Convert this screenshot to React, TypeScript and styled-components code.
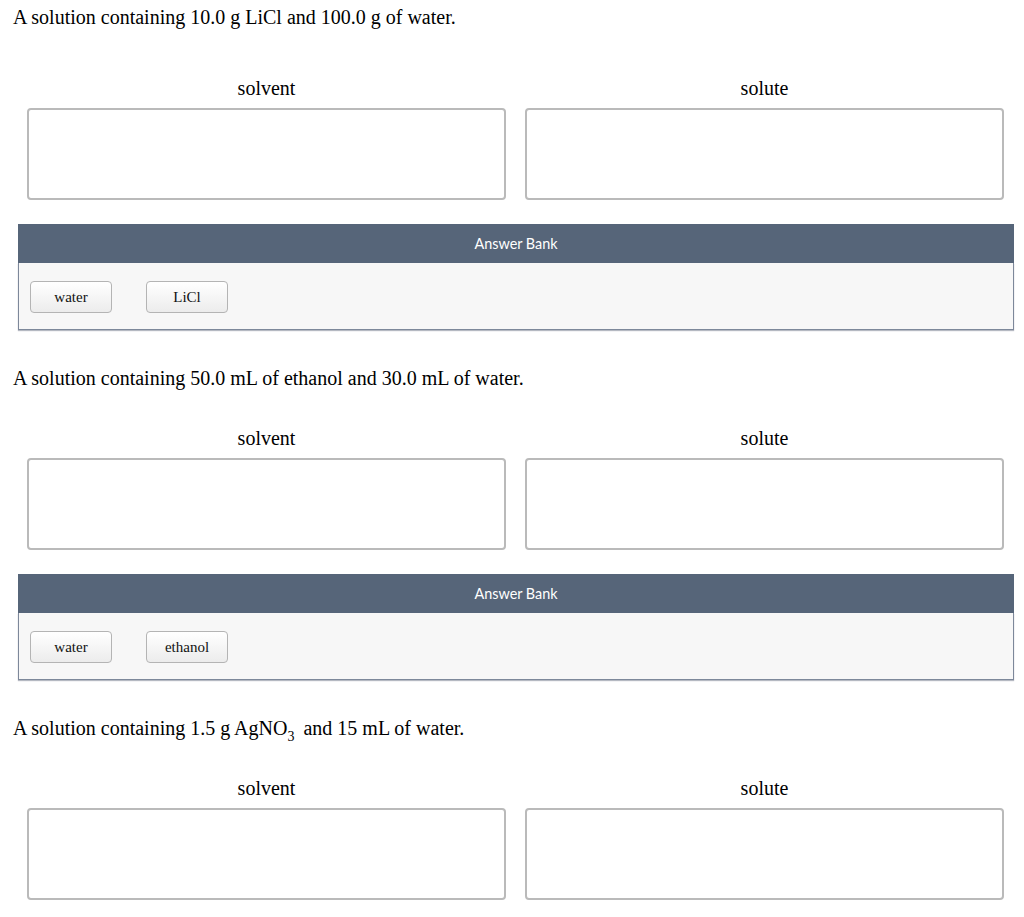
import React from 'react';
import styled, { createGlobalStyle } from 'styled-components';

const GlobalStyle = createGlobalStyle`
  html, body {
    margin: 0;
    padding: 0;
    background: #ffffff;
  }

  body {
    font-family: 'Liberation Serif', 'Times New Roman', serif;
    color: #000000;
  }
`;

const StyledPage = styled.main`
  display: flex;
  flex-direction: column;
  padding: 6px 10px 0 13px;
`;

const StyledQuestion = styled.section<{ $first?: boolean }>`
  display: flex;
  flex-direction: column;
  margin-top: ${({ $first }) => ($first ? '0' : '37px')};

  .prompt {
    margin: 0;
    font-family: 'Liberation Serif', 'Times New Roman', serif;
    font-size: 20px;
    line-height: 23px;
  }

  .prompt sub {
    font-size: 14px;
    line-height: 0;
    vertical-align: -6px;
    margin-right: 4px;
  }

  .targets {
    display: grid;
    grid-template-columns: 1fr 1fr;
    gap: 19px;
    margin: ${({ $first }) => ($first ? '48px' : '37px')} 10px 0 14px;
  }
`;

const StyledTarget = styled.div`
  display: flex;
  flex-direction: column;

  span {
    text-align: center;
    font-family: 'Liberation Serif', 'Times New Roman', serif;
    font-size: 20px;
    line-height: 23px;
    margin-bottom: 8px;
  }

  div {
    height: 88px;
    border: 2px solid #bababa;
    border-radius: 4px;
    background: #ffffff;
  }
`;

const StyledBank = styled.div`
  display: flex;
  flex-direction: column;
  margin: 24px 0 0 5px;

  header {
    height: 39px;
    background: #566579;
    color: #ffffff;
    font-family: Lato, 'Open Sans', sans-serif;
    font-size: 14.4px;
    display: flex;
    align-items: center;
    justify-content: center;
  }

  .items {
    display: flex;
    gap: 34px;
    height: 67px;
    padding: 18px 0 0 11px;
    box-sizing: border-box;
    background: #f7f7f7;
    border: 1px solid #7d889a;
    border-top: none;
    box-shadow: 0 1px 1px rgba(90, 100, 120, 0.45);
  }
`;

const StyledChip = styled.button`
  width: 82px;
  height: 32px;
  border: 1px solid #b4b4b4;
  border-radius: 4px;
  background: linear-gradient(#ffffff, #ececec);
  font-family: 'Liberation Serif', 'Times New Roman', serif;
  font-size: 15px;
  color: #111111;
  padding: 0;
  cursor: pointer;
`;

interface TargetProps {
  label: string;
}

const Target = ({ label }: TargetProps) => {
  return (
    <StyledTarget>
      <span>{label}</span>
      <div />
    </StyledTarget>
  );
};

interface QuestionProps {
  prompt: React.ReactNode;
  items?: string[];
  first?: boolean;
}

const Question = ({ prompt, items, first }: QuestionProps) => {
  return (
    <StyledQuestion $first={first}>
      <p className="prompt">{prompt}</p>

      <div className="targets">
        <Target label="solvent" />
        <Target label="solute" />
      </div>

      {items && (
        <StyledBank>
          <header>Answer Bank</header>
          <div className="items">
            {items.map(item => (
              <StyledChip key={item}>{item}</StyledChip>
            ))}
          </div>
        </StyledBank>
      )}
    </StyledQuestion>
  );
};

const App = () => {
  return (
    <>
      <GlobalStyle />
      <StyledPage>
        <Question
          first
          prompt="A solution containing 10.0 g LiCl and 100.0 g of water."
          items={['water', 'LiCl']}
        />
        <Question
          prompt="A solution containing 50.0 mL of ethanol and 30.0 mL of water."
          items={['water', 'ethanol']}
        />
        <Question
          prompt={
            <>
              A solution containing 1.5 g AgNO<sub>3</sub> and 15 mL of water.
            </>
          }
        />
      </StyledPage>
    </>
  );
};

export default App;
